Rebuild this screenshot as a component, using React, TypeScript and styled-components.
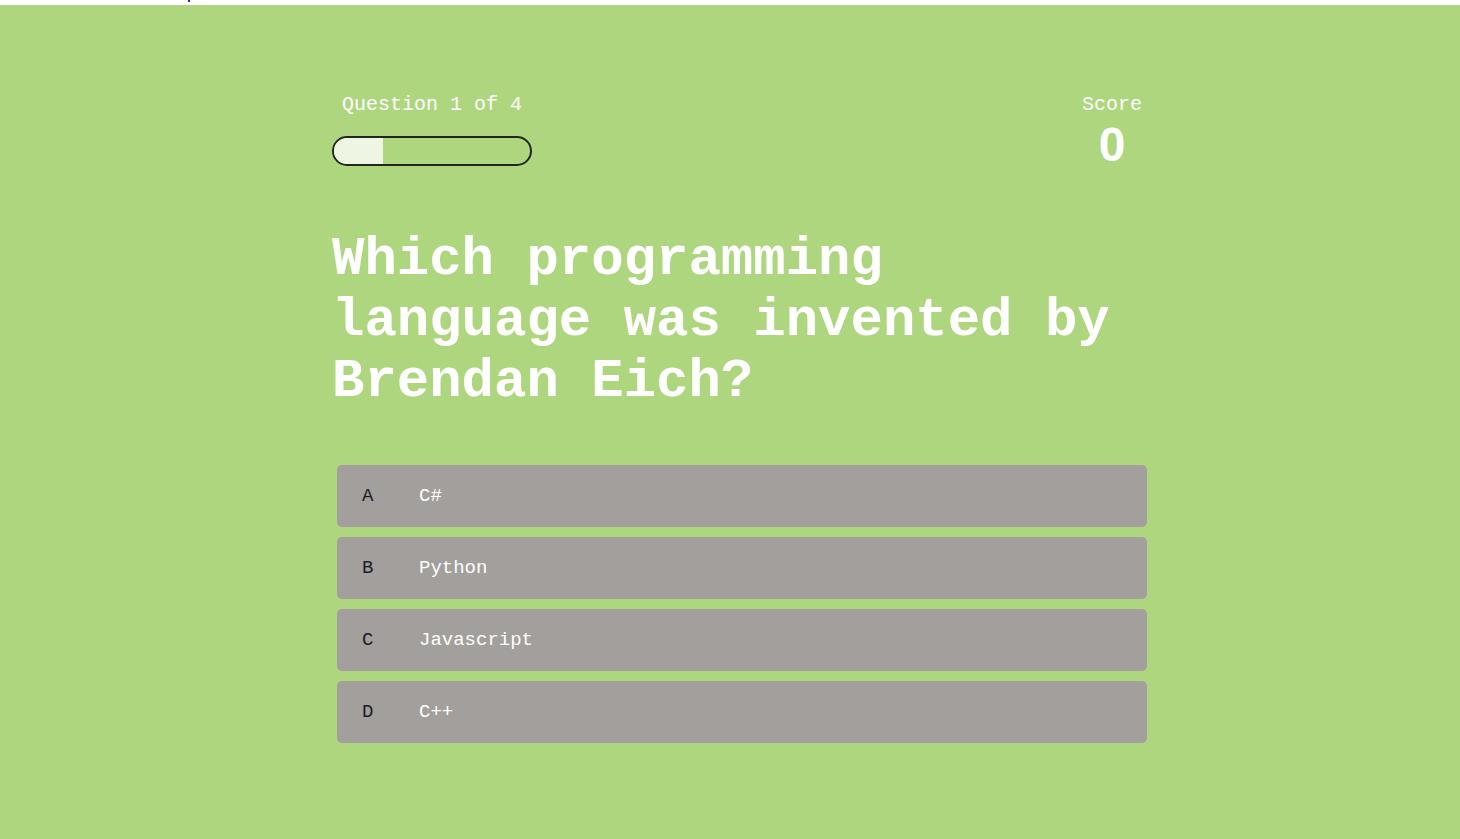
import React from "react";
import styled, { createGlobalStyle } from "styled-components";

const Global = createGlobalStyle`
  html, body { margin: 0; padding: 0; background: #ffffff; }
  body { font-family: "Liberation Mono", "Courier New", monospace; }
`;

const Page = styled.div`
  min-height: 839px;
  display: flex;
  flex-direction: column;
`;

const TopStrip = styled.div`
  height: 5px;
  background: #ffffff;
  display: flex;
  align-items: flex-start;
`;

const Dot = styled.span`
  width: 2px;
  height: 2px;
  margin-left: 188px;
  background: #2020e0;
`;

const Stage = styled.main`
  flex: 1;
  background: #aed67e;
  padding-top: 88px;
`;

const Quiz = styled.section`
  width: 815px;
  margin-left: 332px;
  display: flex;
  flex-direction: column;
`;

const Header = styled.header`
  width: 810px;
  height: 73px;
  display: flex;
  justify-content: space-between;
  align-items: flex-start;
`;

const Progress = styled.div`
  display: flex;
  flex-direction: column;
  gap: 20px;
`;

const Label = styled.div<{ $indent?: boolean }>`
  font-family: "Liberation Mono", "Courier New", monospace;
  font-size: 20px;
  color: #ffffff;
  padding-left: ${(p) => (p.$indent ? "10px" : "0")};
`;

const Bar = styled.div`
  width: 200px;
  height: 30px;
  box-sizing: border-box;
  border: 2px solid #23261f;
  border-radius: 15px;
  overflow: hidden;
  display: flex;
`;

const Fill = styled.div`
  height: 100%;
  background: #eef6e3;
`;

const ScoreBox = styled.div`
  width: 60px;
  display: flex;
  flex-direction: column;
  align-items: center;
`;

const ScoreValue = styled.div`
  font-family: "Liberation Sans", Arial, sans-serif;
  font-weight: bold;
  font-size: 48px;
  line-height: 46px;
  color: #ffffff;
  margin-top: 6px;
`;

const Title = styled.h1`
  margin: 63px 0 53px 0;
  width: 800px;
  font-family: "Liberation Mono", "Courier New", monospace;
  font-weight: bold;
  font-size: 54px;
  line-height: 61px;
  color: #ffffff;
`;

const Answers = styled.div`
  display: flex;
  flex-direction: column;
  gap: 10px;
  padding-left: 5px;
`;

const Answer = styled.button`
  width: 810px;
  height: 62px;
  border: none;
  border-radius: 5px;
  background: #a29f9c;
  display: flex;
  align-items: center;
  padding: 0 0 0 25px;
  font-family: "Liberation Mono", "Courier New", monospace;
  font-size: 19px;
  cursor: pointer;
  text-align: left;
`;

const Letter = styled.span`
  width: 57px;
  color: #1b1b2b;
`;

const AnswerText = styled.span`
  color: #ffffff;
`;

const answers = [
  { k: "A", t: "C#" },
  { k: "B", t: "Python" },
  { k: "C", t: "Javascript" },
  { k: "D", t: "C++" },
];

export default function App() {
  const current = 1;
  const total = 4;
  return (
    <>
      <Global />
      <Page>
        <TopStrip>
          <Dot />
        </TopStrip>
        <Stage>
          <Quiz>
            <Header>
              <Progress>
                <Label $indent>Question {current} of {total}</Label>
                <Bar>
                  <Fill style={{ width: `${(current / total) * 100}%` }} />
                </Bar>
              </Progress>
              <ScoreBox>
                <Label>Score</Label>
                <ScoreValue>0</ScoreValue>
              </ScoreBox>
            </Header>
            <Title>Which programming language was invented by Brendan Eich?</Title>
            <Answers>
              {answers.map((a) => (
                <Answer key={a.k}>
                  <Letter>{a.k}</Letter>
                  <AnswerText>{a.t}</AnswerText>
                </Answer>
              ))}
            </Answers>
          </Quiz>
        </Stage>
      </Page>
    </>
  );
}
